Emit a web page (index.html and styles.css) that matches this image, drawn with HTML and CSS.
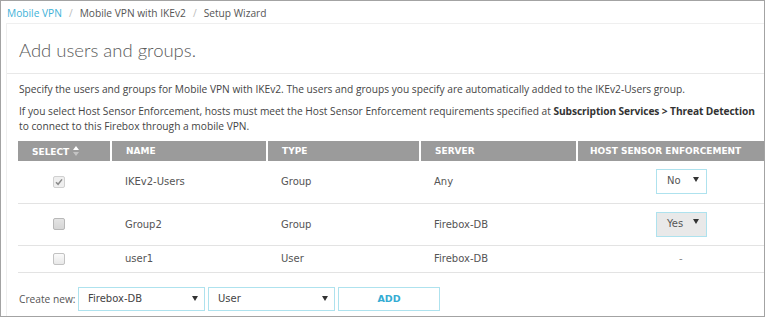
FILE: index.html
```html
<!DOCTYPE html>
<html lang="en">
<head>
<meta charset="utf-8">
<title>Setup Wizard</title>
<link rel="stylesheet" href="styles.css">
</head>
<body>
<div class="frame">
  <nav class="crumbs"><span class="crumb-link">Mobile VPN</span><span class="sep">/</span><span>Mobile VPN with IKEv2</span><span class="sep">/</span><span>Setup Wizard</span></nav>
  <section class="panel">
    <h1 class="title">Add users and groups.</h1>
    <div class="content">
      <p class="para">Specify the users and groups for Mobile VPN with IKEv2. The users and groups you specify are automatically added to the IKEv2-Users group.</p>
      <p class="para">If you select Host Sensor Enforcement, hosts must meet the Host Sensor Enforcement requirements specified at <b>Subscription Services &gt; Threat Detection</b><br>to connect to this Firebox through a mobile VPN.</p>
      <table class="grid">
        <colgroup>
          <col class="c-sel"><col class="c-name"><col class="c-type"><col class="c-server"><col class="c-hse">
        </colgroup>
        <thead>
          <tr>
            <th>SELECT <svg class="sort" width="6" height="10" viewBox="0 0 6 10"><polygon points="3,0 6,4 0,4" fill="#ffffff"/><polygon points="0,6 6,6 3,10" fill="#c4c4c4"/></svg></th>
            <th>NAME</th>
            <th>TYPE</th>
            <th>SERVER</th>
            <th>HOST SENSOR ENFORCEMENT</th>
          </tr>
        </thead>
        <tbody>
          <tr class="tall">
            <td class="sel"><span class="cb cb-checked"><svg width="8" height="8" viewBox="0 0 8 8"><path d="M1 4.2 L3.1 6.3 L7 1.4" fill="none" stroke="#8a8a8a" stroke-width="1.5"/></svg></span></td>
            <td>IKEv2-Users</td>
            <td>Group</td>
            <td>Any</td>
            <td class="hse"><span class="mini-dd"><span>No</span><svg class="caret" width="6" height="5" viewBox="0 0 6 5"><polygon points="0,0 6,0 3,5" fill="#333"/></svg></span></td>
          </tr>
          <tr class="tall">
            <td class="sel"><span class="cb cb-grey"></span></td>
            <td>Group2</td>
            <td>Group</td>
            <td>Firebox-DB</td>
            <td class="hse"><span class="mini-dd mini-dd-on"><span>Yes</span><svg class="caret" width="6" height="5" viewBox="0 0 6 5"><polygon points="0,0 6,0 3,5" fill="#333"/></svg></span></td>
          </tr>
          <tr>
            <td class="sel"><span class="cb"></span></td>
            <td>user1</td>
            <td>User</td>
            <td>Firebox-DB</td>
            <td class="hse dash">-</td>
          </tr>
        </tbody>
      </table>
      <div class="create">
        <span class="create-label">Create new:</span>
        <span class="dd"><span>Firebox-DB</span><svg class="caret" width="6" height="5" viewBox="0 0 6 5"><polygon points="0,0 6,0 3,5" fill="#333"/></svg></span>
        <span class="dd"><span>User</span><svg class="caret" width="6" height="5" viewBox="0 0 6 5"><polygon points="0,0 6,0 3,5" fill="#333"/></svg></span>
        <span class="btn">ADD</span>
      </div>
    </div>
  </section>
</div>
</body>
</html>
```
FILE: styles.css
```css
* { box-sizing: border-box; }
html, body { margin: 0; padding: 0; background: #ffffff; }
body { font-family: "Open Sans", "Liberation Sans", sans-serif; color: #555555; }

.frame {
  width: 765px;
  height: 317px;
  border: 1px solid #a3a3a3;
  overflow: hidden;
  background: #ffffff;
}

.crumbs {
  display: flex;
  gap: 7px;
  height: 22px;
  padding: 4px 0 0 6px;
  font-size: 10.2px;
  line-height: 17px;
  color: #555555;
  white-space: nowrap;
}
.crumb-link { color: #3fb2d8; }
.sep { color: #bbbbbb; }

.panel {
  margin-left: 5px;
  width: 800px;
  height: 300px;
  border-top: 1px solid #efefef;
  border-left: 1px solid #efefef;
}

.title {
  margin: 0;
  height: 50px;
  padding: 14px 0 0 12px;
  font-family: "Lato", "Open Sans", sans-serif;
  font-size: 18.5px;
  line-height: 24px;
  font-weight: 300;
  color: #5a5a5a;
  border-bottom: 1px solid #e8e8e8;
}

.content { padding: 8px 0 0 12px; }

.para {
  margin: 0 0 7px 0;
  font-size: 10.2px;
  line-height: 15px;
  color: #444444;
  white-space: nowrap;
}
.para b { font-weight: 700; color: #333333; letter-spacing: -0.1px; }

.grid {
  margin-top: 0;
  margin-left: -1px;
  border-collapse: collapse;
  table-layout: fixed;
  width: 767px;
  font-family: "DejaVu Sans", Verdana, sans-serif;
  font-size: 10px;
}
.c-sel { width: 93px; }
.c-name { width: 156px; }
.c-type { width: 153px; }
.c-server { width: 157px; }
.c-hse { width: 208px; }

.grid th {
  height: 20px;
  padding: 0 0 0 14px;
  background: #9b9b9b;
  color: #ffffff;
  font-size: 9px;
  font-weight: 700;
  text-align: left;
  border-left: 2px solid #ffffff;
  white-space: nowrap;
}
.grid th:first-child { border-left: none; }
.grid th:last-child { padding-left: 12px; }
.sort { vertical-align: -1px; margin-left: 1px; }

.grid td {
  height: 27px;
  padding: 0 0 0 14px;
  color: #555555;
  border-bottom: 1px solid #e3e3e3;
  vertical-align: middle;
  white-space: nowrap;
}
.grid tr.tall td { height: 42px; }
.grid td.sel { padding-left: 35px; }
.grid td.hse { padding-left: 79px; }
.grid td.dash { padding-left: 102px; color: #888888; }

.cb {
  display: inline-flex;
  align-items: center;
  justify-content: center;
  width: 12px;
  height: 12px;
  border: 1px solid #c2c2c2;
  border-radius: 2px;
  background: linear-gradient(#fafafa, #e8e8e8);
  vertical-align: middle;
}
.cb-checked { background: #efefef; border-color: #d0d0d0; }
.cb-grey { background: linear-gradient(#e4e4e4, #d6d6d6); border-color: #b8b8b8; }

.mini-dd {
  display: inline-flex;
  align-items: center;
  justify-content: space-between;
  width: 51px;
  height: 25px;
  padding: 0 7px 2px 10px;
  border: 1px solid #aee2ee;
  background: #ffffff;
  color: #555555;
}
.mini-dd-on { background: #e9e9e9; }
.caret { display: block; flex-shrink: 0; }
.mini-dd .caret { margin-top: -3px; }

.create {
  display: flex;
  align-items: center;
  gap: 3px;
  margin-top: 14px;
  height: 24px;
}
.create-label {
  flex-shrink: 0;
  width: 56px;
  font-size: 10.2px;
  color: #555555;
  white-space: nowrap;
}
.dd {
  display: flex;
  flex-shrink: 0;
  align-items: center;
  justify-content: space-between;
  width: 127px;
  height: 24px;
  padding: 0 6px 0 9px;
  border: 1px solid #aee2ee;
  font-family: "DejaVu Sans", Verdana, sans-serif;
  font-size: 10px;
  color: #444444;
}
.btn {
  display: flex;
  flex-shrink: 0;
  align-items: center;
  justify-content: center;
  width: 102px;
  height: 24px;
  border: 1px solid #aee2ee;
  font-family: "DejaVu Sans", Verdana, sans-serif;
  font-size: 9.5px;
  font-weight: 700;
  color: #35acd3;
}
```
